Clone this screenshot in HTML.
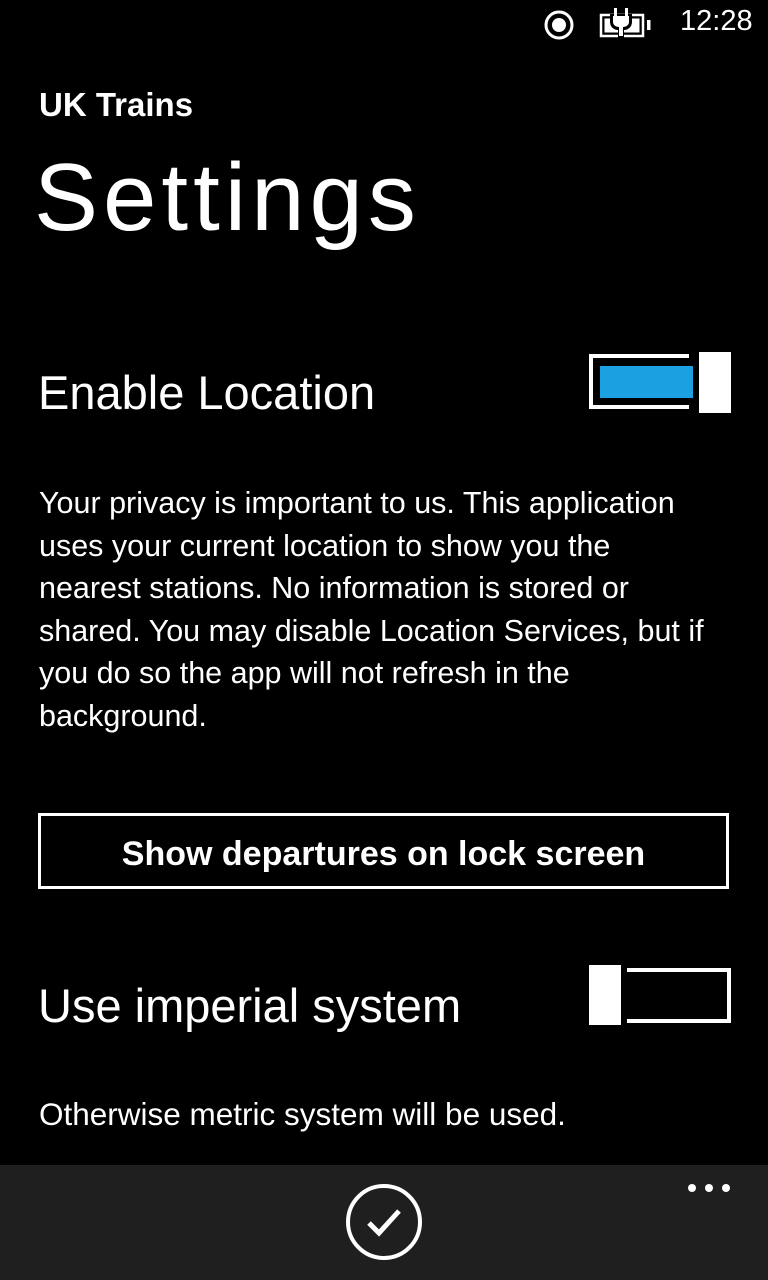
<!DOCTYPE html>
<html><head><meta charset="utf-8"><style>
body{margin:0;width:768px;height:1280px;background:#000;color:#fff;font-family:"Segoe WP","Liberation Sans",sans-serif;position:relative;overflow:hidden}
.a{position:absolute;white-space:nowrap}
</style></head><body>
<svg class="a" style="left:540px;top:0px" width="120" height="50" viewBox="0 0 120 50">
<circle cx="19" cy="25" r="13" fill="none" stroke="#fff" stroke-width="3"/>
<circle cx="19" cy="25" r="7" fill="#fff"/>
<rect x="61" y="15" width="42" height="21" fill="none" stroke="#fff" stroke-width="2.5"/>
<rect x="64.5" y="18.5" width="35" height="14" fill="#fff"/>
<rect x="107" y="20" width="3.5" height="10" fill="#fff"/>
<path d="M70 14h22v8c0 5-4 8-8 8v8h-6v-8c-4 0-8-3-8-8z" fill="#000"/>
<path d="M73 16h16v6c0 3-3 5-6 5v9h-4v-9c-3 0-6-2-6-5z" fill="#fff"/>
<rect x="74" y="8" width="3" height="9" fill="#fff"/><rect x="85" y="8" width="3" height="9" fill="#fff"/>
</svg>
<div class="a" style="left:680px;top:5px;font-size:29px">12:28</div>
<div class="a" style="left:39px;top:86px;font-size:33px;font-weight:bold">UK Trains</div>
<div class="a" style="left:34px;top:143px;font-size:96px;letter-spacing:5px">Settings</div>
<div class="a" style="left:38px;top:365px;font-size:47px">Enable Location</div>
<div class="a" style="left:589px;top:354px;width:96px;height:47px;border:4px solid #fff;border-right:none"></div>
<div class="a" style="left:600px;top:366px;width:93px;height:32px;background:#1ba1e2"></div>
<div class="a" style="left:699px;top:352px;width:32px;height:61px;background:#fff"></div>
<div class="a" style="left:39px;top:482px;font-size:30.5px;line-height:42.6px">Your privacy is important to us. This application<br>uses your current location to show you the<br>nearest stations. No information is stored or<br>shared. You may disable Location Services, but if<br>you do so the app will not refresh in the<br>background.</div>
<div class="a" style="left:38px;top:813px;width:685px;height:70px;border:3px solid #fff;text-align:center;line-height:76px;font-size:34px;font-weight:bold">Show departures on lock screen</div>
<div class="a" style="left:38px;top:978px;font-size:47px">Use imperial system</div>
<div class="a" style="left:589px;top:965px;width:32px;height:60px;background:#fff"></div>
<div class="a" style="left:627px;top:968px;width:100px;height:47px;border:4px solid #fff;border-left:none"></div>
<div class="a" style="left:39px;top:1096px;font-size:31.5px">Otherwise metric system will be used.</div>
<div class="a" style="left:0;top:1165px;width:768px;height:115px;background:#1f1f1f"></div>
<svg class="a" style="left:344px;top:1182px" width="80" height="80" viewBox="0 0 80 80">
<circle cx="40" cy="40" r="36" fill="none" stroke="#fff" stroke-width="4"/>
<path d="M25 41l10 10 20-22" fill="none" stroke="#fff" stroke-width="5"/>
</svg>
<svg class="a" style="left:686px;top:1182px" width="46" height="12"><circle cx="6" cy="6" r="4" fill="#fff"/><circle cx="23" cy="6" r="4" fill="#fff"/><circle cx="40" cy="6" r="4" fill="#fff"/></svg>
</body></html>
